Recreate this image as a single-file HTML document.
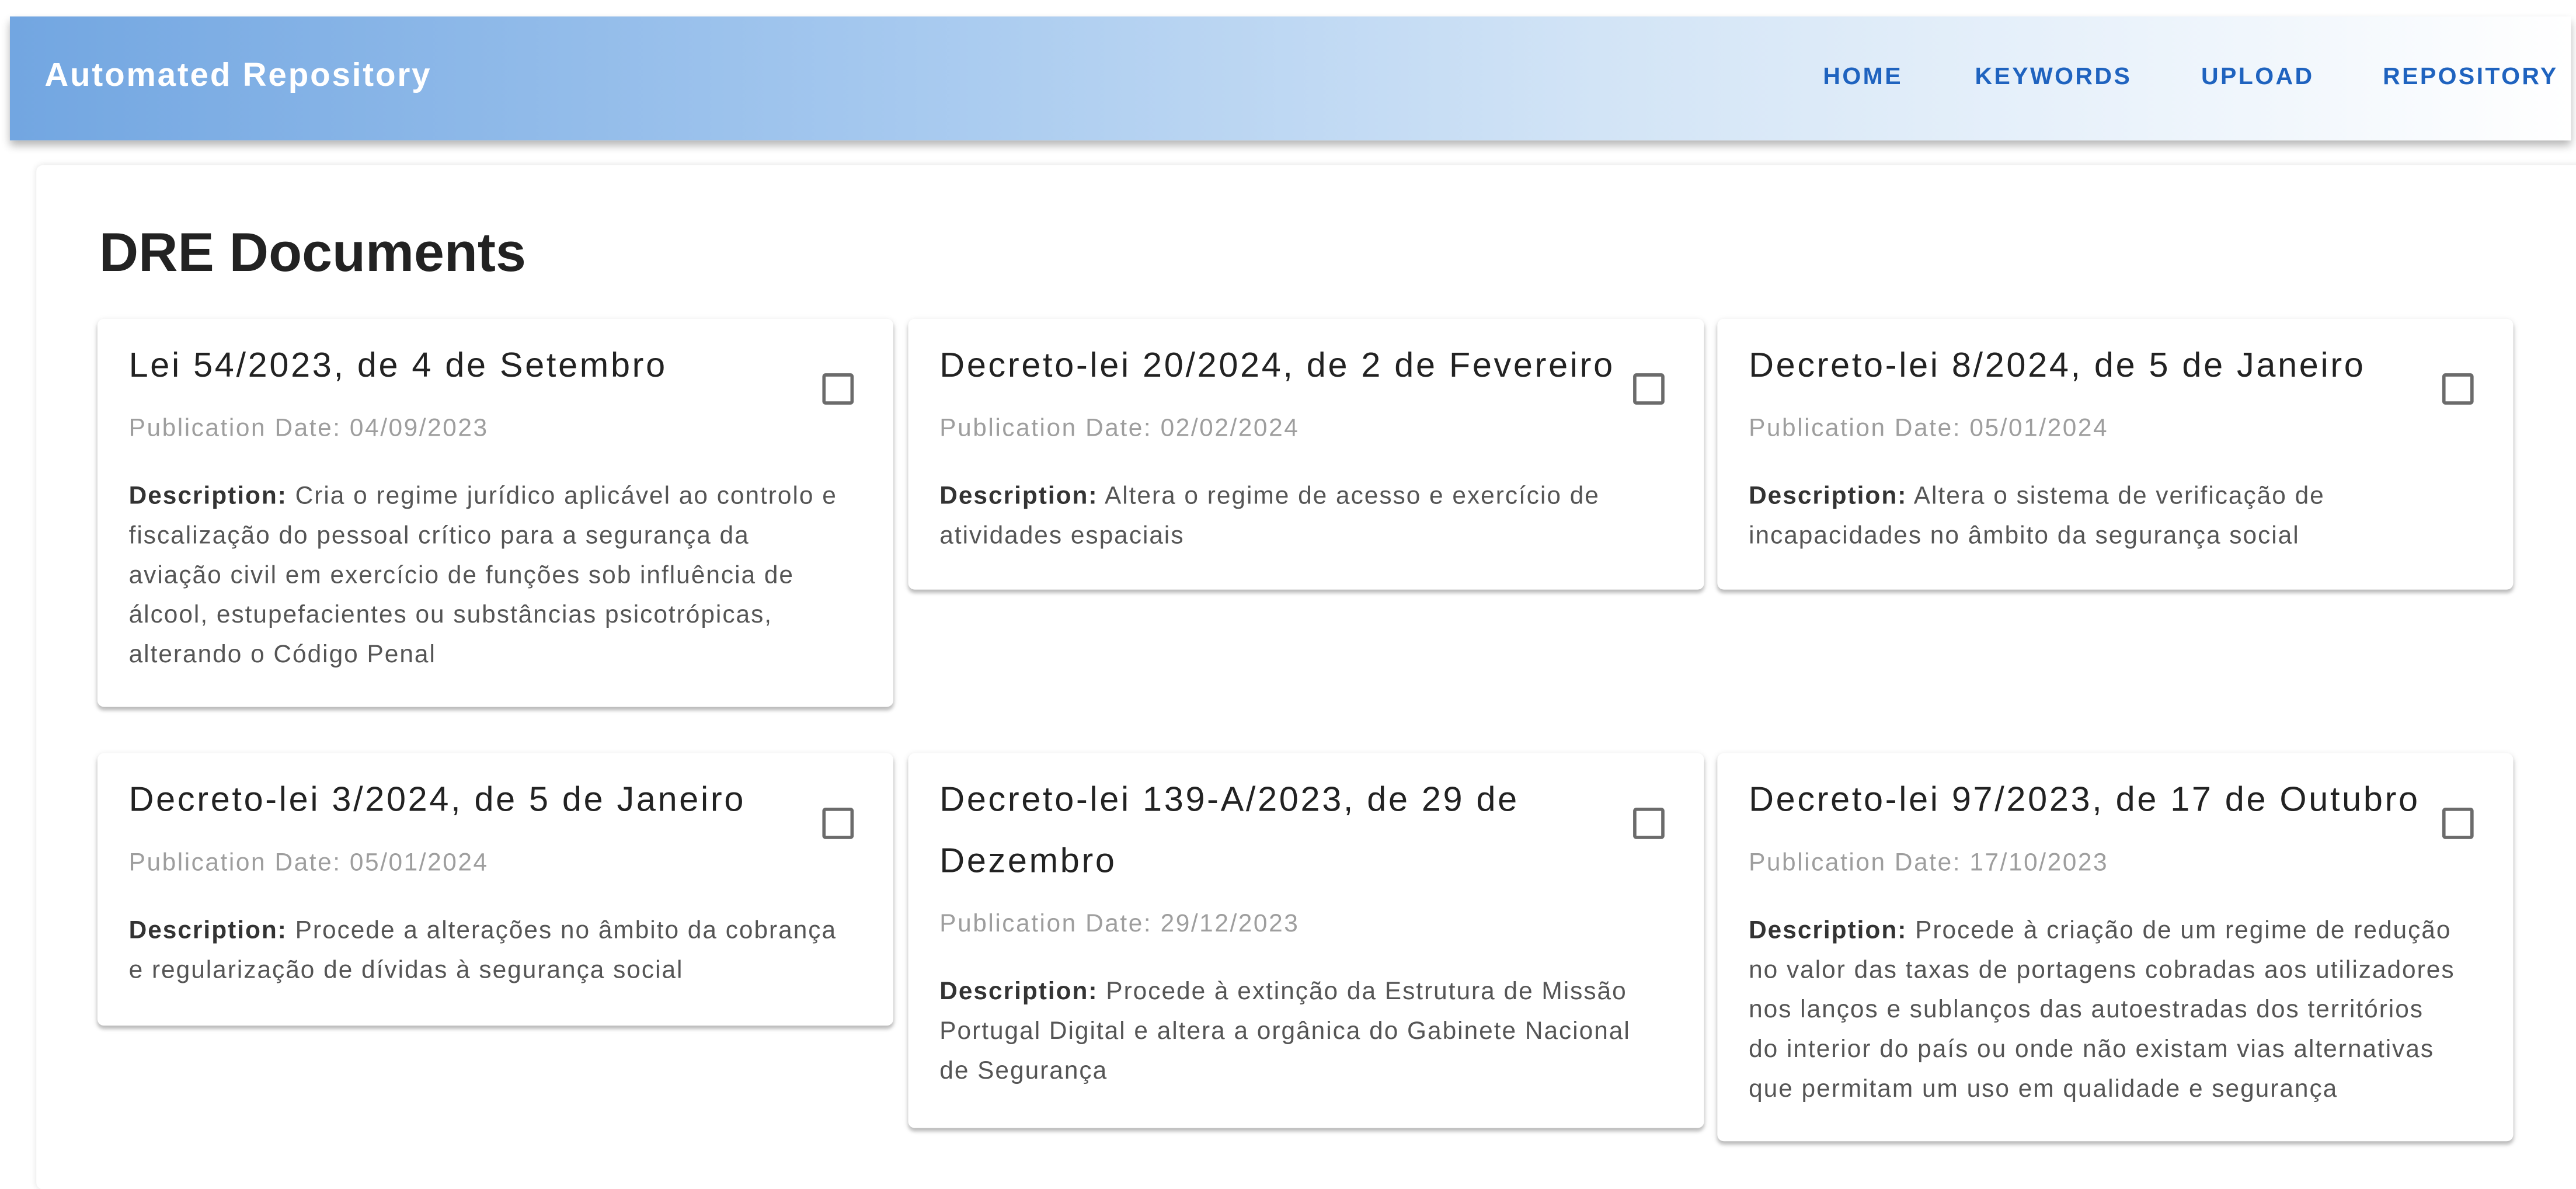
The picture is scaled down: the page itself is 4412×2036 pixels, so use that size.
<!DOCTYPE html>
<html><head><meta charset="utf-8"><style>
html,body{margin:0;padding:0;background:#fff;width:4412px;height:1987px;overflow:hidden}
#w{position:absolute;left:0;top:0;width:1560px;height:703px;transform:scale(2.8282);transform-origin:0 0;font-family:"Liberation Sans",Arial,sans-serif}
.hdr{position:absolute;left:6px;top:10px;width:1551px;height:75px;background:linear-gradient(to right,#72a6e1 0%,#a6c9ef 35%,#d2e4f6 62%,#ffffff 100%);box-shadow:0 3px 5px rgba(0,0,0,.3);z-index:2}
.ttl{position:absolute;left:21px;top:25px;color:#fff;font-weight:bold;font-size:20px;letter-spacing:1px}
.nav{position:absolute;top:29px;color:#1f63bf;font-size:14.5px;font-weight:bold;letter-spacing:1.2px}
.main{position:absolute;left:22px;top:100px;width:1545px;height:620px;background:#fff;border-radius:4px;box-shadow:0 0 4px rgba(0,0,0,.12)}
h1{position:absolute;left:60px;top:134px;margin:0;font-size:33px;font-weight:bold;color:#222;letter-spacing:0px}
.card{position:absolute;width:482px;background:#fff;border-radius:4px;box-shadow:0 2px 2px rgba(0,0,0,.2),0 1px 4px rgba(0,0,0,.12);box-sizing:border-box;padding:10px 19px 19px}
.t{font-size:21px;line-height:37px;color:#222;white-space:nowrap;letter-spacing:1.3px}
.d{font-size:15px;color:#9e9e9e;line-height:20px;margin-top:10px;letter-spacing:0.9px}
.s{font-size:15px;color:#555;line-height:24px;margin-top:19px;white-space:nowrap;letter-spacing:0.7px}
.s b{color:#333}
.cb{position:absolute;right:24px;top:33px;width:15px;height:15px;border:2px solid #6b6b6b;border-radius:2px}
</style></head><body><div id="w">
<div class="hdr"><div class="ttl">Automated Repository</div>
<div class="nav" style="left:1098px">HOME</div>
<div class="nav" style="left:1190px">KEYWORDS</div>
<div class="nav" style="left:1327px">UPLOAD</div>
<div class="nav" style="left:1437px">REPOSITORY</div></div>
<div class="main"></div>
<h1>DRE Documents</h1>

<div class="card" style="left:59px;top:193px;height:235px"><div class="cb"></div>
<div class="t">Lei 54/2023, de 4 de Setembro</div>
<div class="d">Publication Date: 04/09/2023</div>
<div class="s"><b>Description:</b> Cria o regime jurídico aplicável ao controlo e<br>fiscalização do pessoal crítico para a segurança da<br>aviação civil em exercício de funções sob influência de<br>álcool, estupefacientes ou substâncias psicotrópicas,<br>alterando o Código Penal</div></div>

<div class="card" style="left:550px;top:193px;height:164px"><div class="cb"></div>
<div class="t">Decreto-lei 20/2024, de 2 de Fevereiro</div>
<div class="d">Publication Date: 02/02/2024</div>
<div class="s"><b>Description:</b> Altera o regime de acesso e exercício de<br>atividades espaciais</div></div>

<div class="card" style="left:1040px;top:193px;height:164px"><div class="cb"></div>
<div class="t">Decreto-lei 8/2024, de 5 de Janeiro</div>
<div class="d">Publication Date: 05/01/2024</div>
<div class="s"><b>Description:</b> Altera o sistema de verificação de<br>incapacidades no âmbito da segurança social</div></div>

<div class="card" style="left:59px;top:456px;height:165px"><div class="cb"></div>
<div class="t">Decreto-lei 3/2024, de 5 de Janeiro</div>
<div class="d">Publication Date: 05/01/2024</div>
<div class="s"><b>Description:</b> Procede a alterações no âmbito da cobrança<br>e regularização de dívidas à segurança social</div></div>

<div class="card" style="left:550px;top:456px;height:227px"><div class="cb"></div>
<div class="t">Decreto-lei 139-A/2023, de 29 de<br>Dezembro</div>
<div class="d">Publication Date: 29/12/2023</div>
<div class="s"><b>Description:</b> Procede à extinção da Estrutura de Missão<br>Portugal Digital e altera a orgânica do Gabinete Nacional<br>de Segurança</div></div>

<div class="card" style="left:1040px;top:456px;height:235px"><div class="cb"></div>
<div class="t">Decreto-lei 97/2023, de 17 de Outubro</div>
<div class="d">Publication Date: 17/10/2023</div>
<div class="s"><b>Description:</b> Procede à criação de um regime de redução<br>no valor das taxas de portagens cobradas aos utilizadores<br>nos lanços e sublanços das autoestradas dos territórios<br>do interior do país ou onde não existam vias alternativas<br>que permitam um uso em qualidade e segurança</div></div>
</div></body></html>
